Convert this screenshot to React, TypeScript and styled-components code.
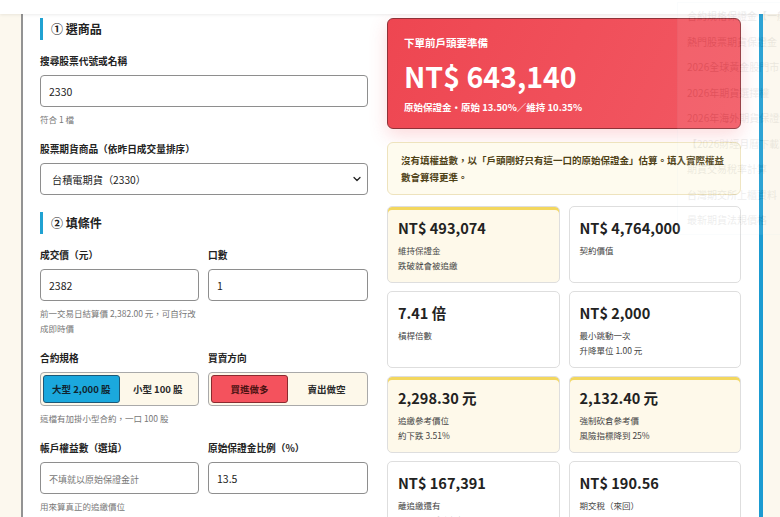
import { createGlobalStyle, styled } from "styled-components";
import { ChevronDown } from "lucide-react";

const GlobalStyle = createGlobalStyle`
  html, body {
    margin: 0;
    padding: 0;
    height: 517px;
    overflow: hidden;
    background: #fcf8ee;
    font-family: "Noto Sans CJK TC", "Noto Sans", sans-serif;
    color: #222;
  }
  * { box-sizing: border-box; }
`;

const TopBar = styled.div`
  position: relative;
  z-index: 2;
  height: 14px;
  background: #fff;
  box-shadow: 0 1px 3px rgba(0, 0, 0, 0.08);
`;

const Panel = styled.main`
  margin: 0 17px 0 21px;
  min-height: 520px;
  background: #fff;
  border-left: 2px solid #939393;
  border-right: 4px solid #1b9bd1;
  padding: 4px 18px 0 17px;
  display: grid;
  grid-template-columns: 328px 354px;
  column-gap: 19px;
  align-items: start;
`;

const Column = styled.div`
  display: flex;
  flex-direction: column;
`;

const SectionTitle = styled.h2<{ $spaced?: boolean }>`
  margin: ${(p) => (p.$spaced ? "17px" : "0")} 0 13px;
  height: 22px;
  line-height: 22px;
  border-left: 3px solid #20a2d2;
  padding-left: 8px;
  font-size: 12px;
  font-weight: 700;
  color: #222;
`;

const Fields = styled.div`
  display: flex;
  flex-direction: column;
  gap: 14px;
`;

const Row = styled.div`
  display: grid;
  grid-template-columns: 159px 160px;
  column-gap: 9px;
  align-items: start;
`;

const Field = styled.div`
  display: flex;
  flex-direction: column;
  min-width: 0;
`;

const Label = styled.label`
  font-size: 9.7px;
  font-weight: 700;
  line-height: 16px;
  margin-bottom: 6px;
  color: #222;
`;

const Input = styled.input`
  height: 32px;
  width: 100%;
  border: 1px solid #8e8e8e;
  border-radius: 4px;
  padding: 0 8px;
  font-family: inherit;
  font-size: 10.5px;
  color: #222;
  background: #fff;
  outline: none;
  &::placeholder {
    color: #777;
    font-size: 9px;
  }
`;

const SelectWrap = styled.div`
  position: relative;
  height: 32px;
`;

const Select = styled.select`
  appearance: none;
  width: 100%;
  height: 32px;
  border: 1px solid #8e8e8e;
  border-radius: 4px;
  padding: 0 11px;
  font-family: inherit;
  font-size: 10.2px;
  color: #222;
  background: #fff;
`;

const SelectIcon = styled(ChevronDown)`
  position: absolute;
  right: 5px;
  top: 10px;
  pointer-events: none;
  color: #222;
`;

const Hint = styled.p`
  margin: 5px 0 0;
  font-size: 8.5px;
  line-height: 15px;
  color: #777;
`;

const SegmentGroup = styled.div`
  display: grid;
  grid-template-columns: 1fr 1fr;
  height: 34px;
  padding: 2px;
  border: 1px solid #a9a9a9;
  border-radius: 4px;
  background: #fdf8ea;
`;

const SegmentButton = styled.button<{ $active?: boolean; $tone: "blue" | "red" }>`
  border: 1px solid transparent;
  border-radius: 3px;
  font-family: inherit;
  font-size: 9.5px;
  font-weight: 700;
  color: #2a2a2a;
  background: transparent;
  padding: 0;
  ${(p) =>
    p.$active &&
    (p.$tone === "blue"
      ? `background: #1ba8dd; border-color: #1d5876; color: #10242f;`
      : `background: #f4525d; border-color: #8a2a2f; color: #4a1212;`)}
`;

const HeroCard = styled.section`
  border: 1px solid #8f3238;
  border-radius: 6px;
  padding: 15px 16px 13px;
  background: linear-gradient(115deg, #ee4651 0%, #f25863 100%);
  box-shadow: 0 6px 18px rgba(240, 80, 90, 0.22);
  color: #fff;
`;

const HeroTitle = styled.div`
  font-size: 10.5px;
  font-weight: 700;
  line-height: 18px;
`;

const HeroAmount = styled.div`
  font-size: 28.5px;
  font-weight: 700;
  line-height: 38px;
  margin-top: 5px;
`;

const HeroSub = styled.div`
  font-size: 9.5px;
  font-weight: 700;
  line-height: 16px;
  margin-top: 4px;
`;

const Note = styled.div`
  margin-top: 13px;
  padding: 9px 13px 8px;
  border: 1px solid #eee3bd;
  border-radius: 6px;
  background: #fefbee;
  font-size: 9.5px;
  font-weight: 700;
  line-height: 17px;
  color: #4f4216;
`;

const StatGrid = styled.div`
  margin-top: 11px;
  display: grid;
  grid-template-columns: 1fr 1fr;
  column-gap: 9px;
  row-gap: 8px;
`;

const StatCard = styled.div<{ $warn?: boolean }>`
  height: 77px;
  padding: 10px 10px;
  border: 1px solid #dedede;
  border-radius: 5px;
  background: ${(p) => (p.$warn ? "#fef9ea" : "#fff")};
  box-shadow: ${(p) => (p.$warn ? "inset 0 3px 0 #f3d75e" : "none")};
`;

const StatValue = styled.div`
  font-size: 14.5px;
  font-weight: 700;
  line-height: 22px;
  color: #222;
`;

const StatLabel = styled.div`
  margin-top: 4px;
  font-size: 8.5px;
  line-height: 15px;
  color: #444;
`;

// faded dropdown from the site nav, mid-transition
const NavMenu = styled.ul`
  position: absolute;
  top: 2px;
  left: 677px;
  width: 103px;
  height: 233px;
  margin: 0;
  padding: 0 0 0 9px;
  list-style: none;
  overflow: hidden;
  background: #fff;
  border: 1px solid #c9e2ee;
  border-right: none;
  opacity: 0.08;
  z-index: 5;
`;

const NavItem = styled.li`
  font-size: 10px;
  line-height: 25.5px;
  white-space: nowrap;
  color: #222;
`;

const stats = [
  { value: "NT$ 493,074", lines: ["維持保證金", "跌破就會被追繳"], warn: true },
  { value: "NT$ 4,764,000", lines: ["契約價值"] },
  { value: "7.41 倍", lines: ["槓桿倍數"] },
  { value: "NT$ 2,000", lines: ["最小跳動一次", "升降單位 1.00 元"] },
  { value: "2,298.30 元", lines: ["追繳參考價位", "約下跌 3.51%"], warn: true },
  { value: "2,132.40 元", lines: ["強制砍倉參考價", "風險指標降到 25%"], warn: true },
  { value: "NT$ 167,391", lines: ["離追繳還有", "每口可承受的虧損"] },
  { value: "NT$ 190.56", lines: ["期交稅（來回）"] },
];

const navLinks = [
  "合約規格保證金【一般】",
  "熱門股票期貨保證金",
  "2026全球黃金股門市",
  "2026年期貨選擇權",
  "2026年海外期貨保證金",
  "【2026財經月曆下載】",
  "期貨交易稅率計算",
  "台灣期交所上櫃資料",
  "最新期貨法規價格",
];

export default function App() {
  return (
    <>
      <GlobalStyle />
      <TopBar />
      <NavMenu>
        {navLinks.map((item) => (
          <NavItem key={item}>{item}</NavItem>
        ))}
      </NavMenu>
      <Panel>
        <Column>
          <SectionTitle>① 選商品</SectionTitle>
          <Fields>
            <Field>
              <Label>搜尋股票代號或名稱</Label>
              <Input defaultValue="2330" />
              <Hint>符合 1 檔</Hint>
            </Field>
            <Field>
              <Label>股票期貨商品（依昨日成交量排序）</Label>
              <SelectWrap>
                <Select defaultValue="2330">
                  <option value="2330">台積電期貨（2330）</option>
                </Select>
                <SelectIcon size={12} strokeWidth={2.5} />
              </SelectWrap>
            </Field>
          </Fields>

          <SectionTitle $spaced>② 填條件</SectionTitle>
          <Fields>
            <Row>
              <Field>
                <Label>成交價（元）</Label>
                <Input defaultValue="2382" />
                <Hint>前一交易日結算價 2,382.00 元，可自行改成即時價</Hint>
              </Field>
              <Field>
                <Label>口數</Label>
                <Input defaultValue="1" />
              </Field>
            </Row>
            <Row>
              <Field>
                <Label>合約規格</Label>
                <SegmentGroup>
                  <SegmentButton $tone="blue" $active>
                    大型 2,000 股
                  </SegmentButton>
                  <SegmentButton $tone="blue">小型 100 股</SegmentButton>
                </SegmentGroup>
                <Hint>這檔有加掛小型合約，一口 100 股</Hint>
              </Field>
              <Field>
                <Label>買賣方向</Label>
                <SegmentGroup>
                  <SegmentButton $tone="red" $active>
                    買進做多
                  </SegmentButton>
                  <SegmentButton $tone="red">賣出做空</SegmentButton>
                </SegmentGroup>
              </Field>
            </Row>
            <Row>
              <Field>
                <Label>帳戶權益數（選填）</Label>
                <Input placeholder="不填就以原始保證金計" />
                <Hint>用來算真正的追繳價位</Hint>
              </Field>
              <Field>
                <Label>原始保證金比例（%）</Label>
                <Input defaultValue="13.5" />
              </Field>
            </Row>
          </Fields>
        </Column>

        <Column>
          <HeroCard>
            <HeroTitle>下單前戶頭要準備</HeroTitle>
            <HeroAmount>NT$ 643,140</HeroAmount>
            <HeroSub>原始保證金・原始 13.50%／維持 10.35%</HeroSub>
          </HeroCard>
          <Note>
            沒有填權益數，以「戶頭剛好只有這一口的原始保證金」估算。填入實際權益數會算得更準。
          </Note>
          <StatGrid>
            {stats.map((s) => (
              <StatCard key={s.value} $warn={s.warn}>
                <StatValue>{s.value}</StatValue>
                <StatLabel>
                  {s.lines.map((line) => (
                    <div key={line}>{line}</div>
                  ))}
                </StatLabel>
              </StatCard>
            ))}
          </StatGrid>
        </Column>
      </Panel>
    </>
  );
}
